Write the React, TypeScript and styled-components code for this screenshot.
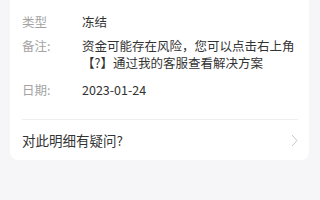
import styled, { createGlobalStyle } from 'styled-components';

const GlobalStyle = createGlobalStyle`
  html, body {
    margin: 0;
    padding: 0;
    background: #f6f6f9;
    font-family: "Noto Sans CJK SC", "Noto Sans", sans-serif;
  }
`;

const Page = styled.div`
  width: 320px;
  height: 200px;
  padding: 0 11px 0 10px;
  box-sizing: border-box;
`;

const Card = styled.div`
  background: #ffffff;
  border-radius: 0 0 8px 8px;
  padding: 0 11px 0 12px;
`;

const InfoList = styled.div`
  display: flex;
  flex-direction: column;
  gap: 7px;
  padding: 13px 0 21px;
  border-bottom: 1px solid #efefef;
`;

const Row = styled.div<{ $extra?: number }>`
  display: flex;
  font-size: 12.5px;
  line-height: 17px;
  margin-bottom: ${(p) => p.$extra ?? 0}px;
`;

const Label = styled.div`
  flex: 0 0 60px;
  color: #a3a3a3;
`;

const Value = styled.div`
  flex: 1;
  color: #333333;
`;

const QuestionRow = styled.div`
  display: flex;
  align-items: center;
  justify-content: space-between;
  height: 40px;
  font-size: 13.5px;
  color: #333333;
`;

const Chevron = () => (
  <svg width="7" height="13" viewBox="0 0 7 13" fill="none">
    <path d="M1 1l5 5.5L1 12" stroke="#c8c8c8" strokeWidth="1" />
  </svg>
);

const rows = [
  { label: '类型', value: '冻结' },
  { label: '备注:', value: '资金可能存在风险，您可以点击右上角【?】通过我的客服查看解决方案', extra: 3 },
  { label: '日期:', value: '2023-01-24' },
];

const App = () => {
  return (
    <Page>
      <GlobalStyle />
      <Card>
        <InfoList>
          {rows.map((r) => (
            <Row key={r.label} $extra={r.extra}>
              <Label>{r.label}</Label>
              <Value>{r.value}</Value>
            </Row>
          ))}
        </InfoList>
        <QuestionRow>
          <span>对此明细有疑问?</span>
          <Chevron />
        </QuestionRow>
      </Card>
    </Page>
  );
};

export default App;
